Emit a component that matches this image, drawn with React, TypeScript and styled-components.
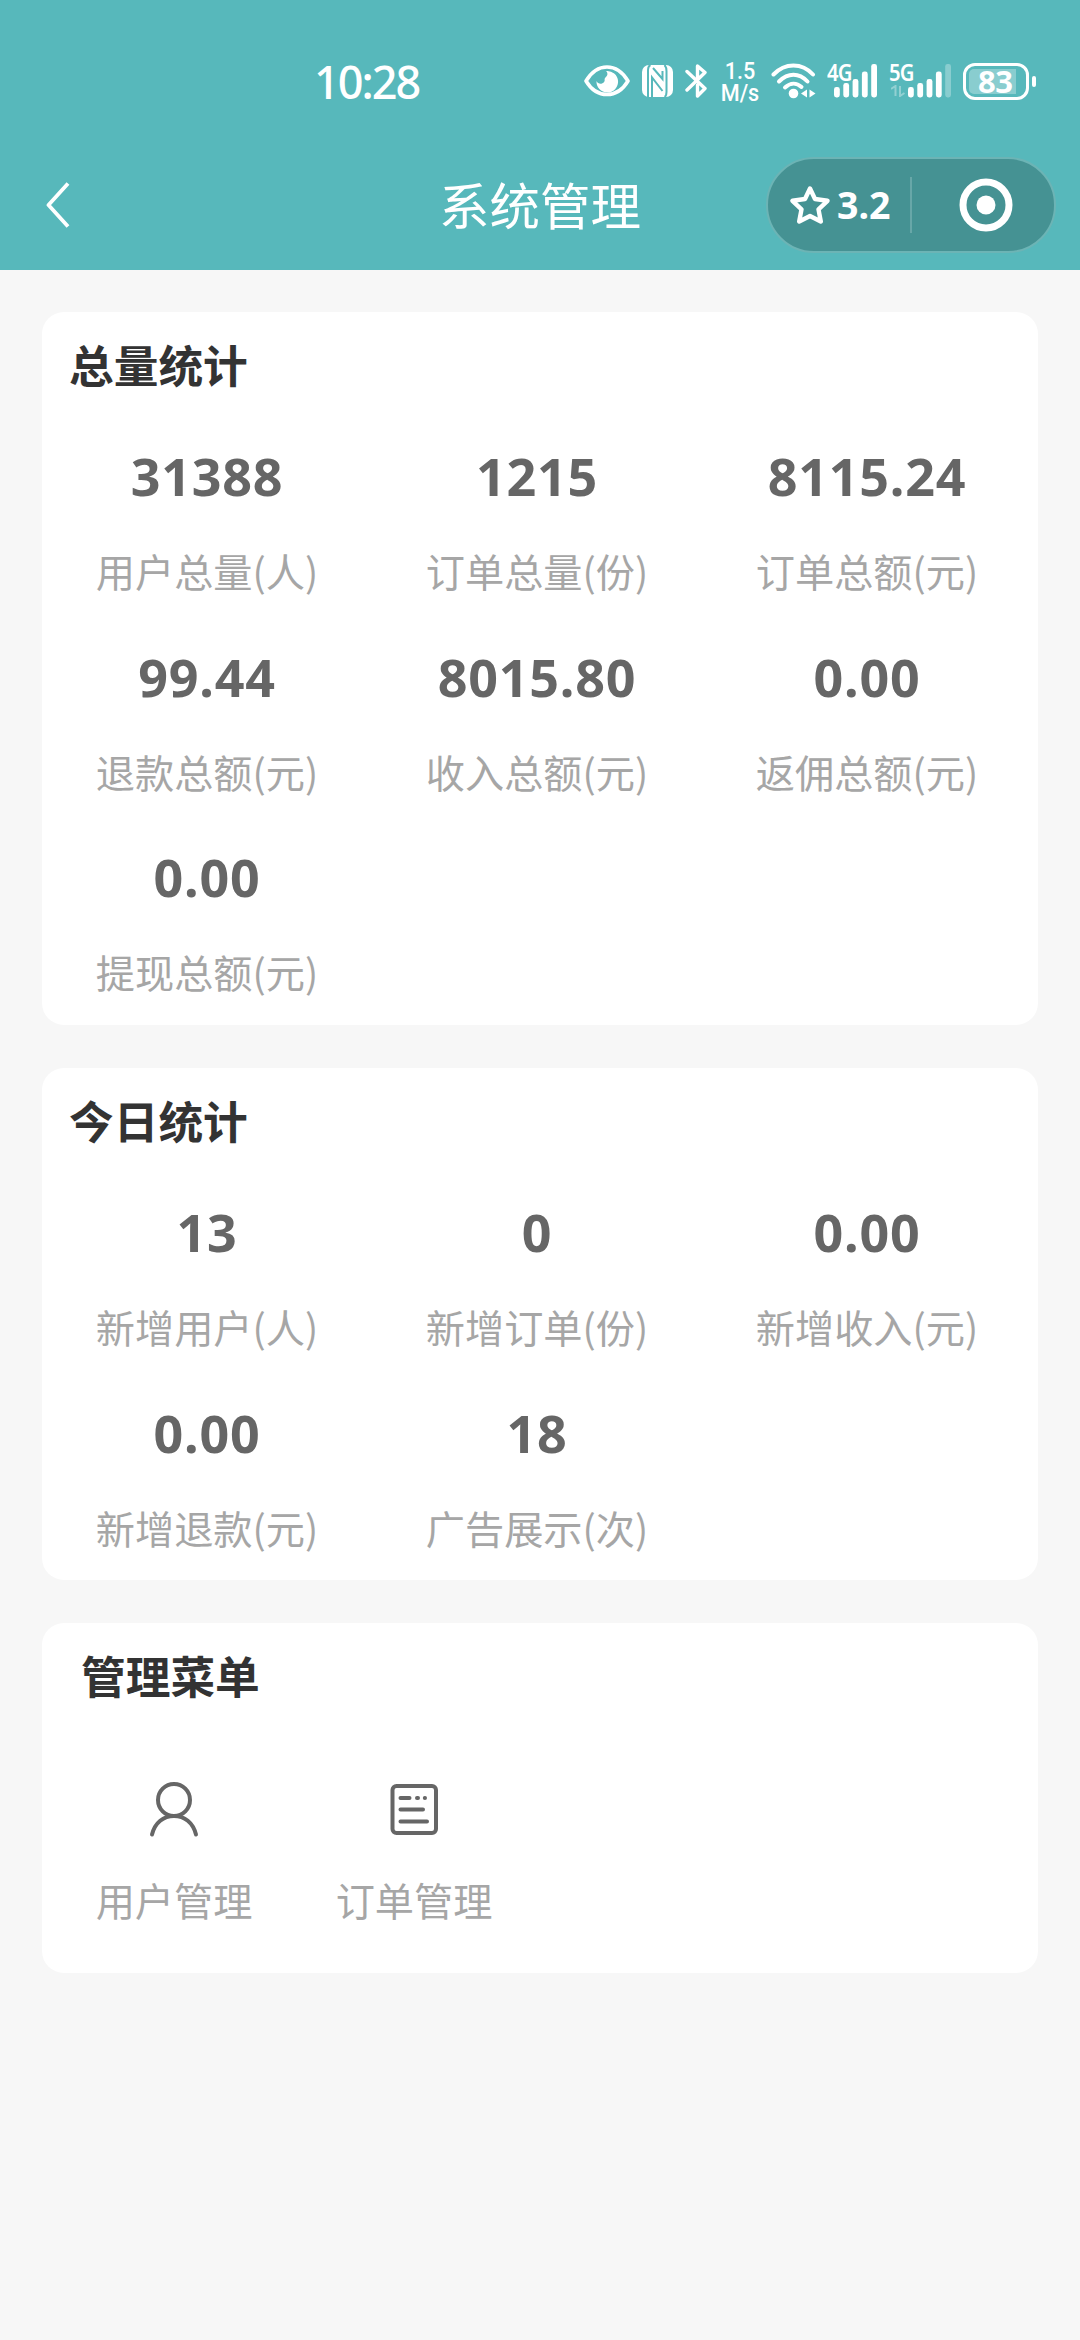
import React from "react";
import styled, { createGlobalStyle } from "styled-components";

const GlobalStyle = createGlobalStyle`
  body {
    margin: 0;
    background: #f7f7f7;
    font-family: "Noto Sans CJK SC", sans-serif;
  }
  * { box-sizing: border-box; }
  svg { display: block; flex: none; }
`;

const Screen = styled.div`
  width: 1080px;
  min-height: 2340px;
  background: #f7f7f7;
`;

const Header = styled.header`
  height: 270px;
  background: #57b8bb;
  color: #fff;
`;

const StatusBar = styled.div`
  height: 162px;
  padding: 0 44px 0 314px;
  display: flex;
  justify-content: space-between;
  align-items: center;
`;

const Clock = styled.span`
  padding-top: 1px;
  font: 500 45px/60px "Noto Sans", sans-serif;
  letter-spacing: -2px;
`;

const StatusIcons = styled.div`
  display: flex;
  align-items: center;
`;

const IconGroup = styled.div`
  display: flex;
  align-items: center;
  gap: 12px;
`;

const Speed = styled.div`
  width: 42px;
  margin: 2px 10px 0 11px;
  text-align: center;
  font: 500 23.5px/22px Roboto, sans-serif;
  transform: scaleX(0.92);
`;

const Signal = styled.div<{ $left: number; $width: number }>`
  position: relative;
  width: ${(p) => p.$width}px;
  height: 36px;
  margin-left: ${(p) => p.$left}px;
`;

const NetworkLabel = styled.span`
  position: absolute;
  left: 0;
  top: -2px;
  font: 600 23px/22px "Noto Sans", sans-serif;
  letter-spacing: -1px;
  transform: scaleX(0.88);
  transform-origin: left;
`;

const ArrowSlot = styled.div`
  position: absolute;
  left: 2px;
  bottom: 2px;
`;

const Battery = styled.div`
  margin-left: 12px;
  display: flex;
  align-items: center;
  gap: 3px;
`;

const BatteryShell = styled.div`
  width: 66px;
  height: 37px;
  padding: 3px;
  border: 3px solid #fff;
  border-radius: 12px;
`;

const BatteryLevel = styled.div`
  width: 47px;
  height: 25px;
  padding-left: 9px;
  border-radius: 5px 0 0 5px;
  background: rgba(255, 255, 255, 0.3);
  font: 700 31px/25px "Noto Sans", sans-serif;
  letter-spacing: -0.5px;
`;

const BatteryTip = styled.div`
  width: 4px;
  height: 11px;
  border-radius: 2px;
  background: #fff;
`;

const NavBar = styled.nav`
  height: 96px;
  margin-top: -5px;
  padding: 0 24px 0 46px;
  display: grid;
  grid-template-columns: 268px 1fr 290px;
  align-items: center;
`;

const NavTitle = styled.h1`
  margin: 0 0 4px;
  text-align: center;
  font-size: 50.5px;
  line-height: 72px;
  font-weight: 400;
`;

const Capsule = styled.div`
  width: 290px;
  height: 96px;
  border: 2px solid #6cb4b5;
  border-radius: 48px;
  background: #459293;
  display: flex;
  align-items: center;
`;

const Rating = styled.div`
  width: 144px;
  height: 56px;
  padding-left: 22px;
  border-right: 2px solid #68a7a8;
  display: flex;
  align-items: center;
  gap: 7px;
  font: 700 37.5px/56px "Noto Sans", sans-serif;
`;

const CloseTarget = styled.div`
  flex: 1;
  padding-left: 5px;
  display: flex;
  justify-content: center;
`;

const Content = styled.main`
  padding: 42px;
  display: flex;
  flex-direction: column;
  gap: 43px;
`;

const Card = styled.section<{ $height: number; $inset?: number }>`
  height: ${(p) => p.$height}px;
  padding: 18px ${(p) => p.$inset ?? 0}px 0;
  background: #fff;
  border-radius: 22px;
`;

const CardTitle = styled.h2`
  margin: 0;
  padding-left: 27px;
  color: #333;
  font-size: 44.7px;
  line-height: 68px;
  font-weight: 700;
`;

const StatGrid = styled.div`
  margin-top: 30px;
  display: grid;
  grid-template-columns: repeat(3, 330px);
  grid-auto-rows: 200.5px;
`;

const Stat = styled.div`
  display: flex;
  flex-direction: column;
  align-items: center;
`;

const StatValue = styled.strong`
  color: #666;
  font: 700 52px/96px "Noto Sans", sans-serif;
  letter-spacing: 0.8px;
`;

const Label = styled.span`
  color: #a6a6a6;
  font-size: 39.2px;
  line-height: 92px;
  white-space: nowrap;
`;

const MenuRow = styled.div`
  margin-top: 48px;
  display: flex;
`;

const MenuItem = styled.div`
  width: 240px;
  padding-top: 23px;
  display: flex;
  flex-direction: column;
  align-items: center;
  gap: 15px;
`;

type Item = { value: string; label: string };

const totals: Item[] = [
  { value: "31388", label: "用户总量(人)" },
  { value: "1215", label: "订单总量(份)" },
  { value: "8115.24", label: "订单总额(元)" },
  { value: "99.44", label: "退款总额(元)" },
  { value: "8015.80", label: "收入总额(元)" },
  { value: "0.00", label: "返佣总额(元)" },
  { value: "0.00", label: "提现总额(元)" },
];

const today: Item[] = [
  { value: "13", label: "新增用户(人)" },
  { value: "0", label: "新增订单(份)" },
  { value: "0.00", label: "新增收入(元)" },
  { value: "0.00", label: "新增退款(元)" },
  { value: "18", label: "广告展示(次)" },
];

const EyeIcon = () => (
  <svg width="46" height="34" viewBox="0 0 46 34" fill="none">
    <path d="M2 17C8 7 15 3 23 3s15 4 21 14c-6 10-13 13.500-21 13.500S8 27 2 17Z" stroke="#fff" strokeWidth="3.600" strokeLinejoin="round" />
    <path d="M22 7a10.800 10.800 0 1 1-9.500 10c1 2.300 3.500 3.300 5.500 2.500 2.200-.8 3-2.500 2.600-4.300-.1-1.500 2-2 2.700-4.200.4-1.600-.1-3-1.300-4Z" fill="#fff" />
  </svg>
);

const NfcIcon = () => (
  <svg width="31" height="32" viewBox="0 0 31 32" fill="none">
    <rect width="31" height="32" rx="7" fill="#fff" />
    <g stroke="#57b8bb" strokeWidth="2">
      <path d="M8.500 0Q6 1 6 5V32" />
      <path d="M22.500 0Q24.500 2 24.500 6V27Q24.500 31 22.500 32" />
      <path d="M10 32V12.500L20.500 26" />
      <path d="M11 3L20.500 14V6" />
    </g>
  </svg>
);

const BluetoothIcon = () => (
  <svg width="23" height="36" viewBox="0 0 23 36" fill="none" stroke="#fff" strokeWidth="3.400" strokeLinejoin="round" strokeLinecap="round">
    <path d="M2 8.500L20 25.500L12.500 33V22M12.500 14V3L20 9.500L2 27" />
  </svg>
);

const WifiIcon = () => (
  <svg width="45" height="36" viewBox="0 0 45 36" fill="none">
    <g stroke="#fff" strokeWidth="4" strokeLinecap="round">
      <path d="M2.500 11.500C14-.5 31-.5 42 11.500" />
      <path d="M8 18.500C17 9.500 28 9.500 36.500 18.500" />
      <path d="M14 24.500C19.500 19.500 25.500 19.500 30.500 24" />
    </g>
    <circle cx="22.500" cy="30.500" r="4.800" fill="#fff" />
    <path d="M36 26.500v8l-6-4ZM38.500 26.500v8l6-4Z" fill="#fff" />
  </svg>
);

const barTops = [24, 20, 16, 8.5, 1];

const Bars = ({ width, offset, active }: { width: number; offset: number; active: number }) => (
  <svg width={width} height="36" viewBox={`0 0 ${width} 36`}>
    {barTops.map((top, i) => (
      <rect
        key={top}
        x={offset + i * 9.3}
        y={top}
        width="5.800"
        height={34.5 - top}
        rx="2.400"
        fill="#fff"
        opacity={i < active ? 1 : 0.3}
      />
    ))}
  </svg>
);

const DataArrows = () => (
  <svg width="14" height="12" viewBox="0 0 14 12" fill="none" stroke="#fff" strokeWidth="2" opacity="0.35">
    <path d="M0 4L4.500 1v10M9 1v10l4.500-3" />
  </svg>
);

const BackIcon = () => (
  <svg width="24" height="46" viewBox="0 0 24 46" fill="none" stroke="#fff" strokeWidth="3.800" strokeLinejoin="round">
    <path d="M22 1.500L2.500 23L22 44.500" />
  </svg>
);

const StarIcon = () => (
  <svg width="40" height="40" viewBox="0 0 40 40" fill="none" stroke="#fff" strokeWidth="4.400" strokeLinejoin="round">
    <path d="M20 3.500L25 14L37.500 15.800L28.500 24.300L30.800 36.500L20 31L9.200 36.500L11.500 24.300L2.500 15.800L15 14Z" />
  </svg>
);

const TargetIcon = () => (
  <svg width="54" height="54" viewBox="0 0 54 54" fill="none">
    <circle cx="27" cy="27" r="23" stroke="#fff" strokeWidth="7" />
    <circle cx="27" cy="27" r="9.500" fill="#fff" />
  </svg>
);

const UserIcon = () => (
  <svg width="54" height="58" viewBox="0 0 54 58" fill="none" stroke="#666" strokeWidth="4" strokeLinecap="round">
    <circle cx="27" cy="20" r="16" />
    <path d="M5 54.500C8 42.500 16.500 36 27 36s19 6.500 22 18.500" />
  </svg>
);

const OrderIcon = () => (
  <svg width="54" height="58" viewBox="0 0 54 58" fill="none" stroke="#666" strokeWidth="4" strokeLinecap="round">
    <rect x="5.500" y="6" width="43.500" height="47" rx="4" />
    <path d="M13.500 18h9M30 18h1M37.800 18h.2M13.500 29.500H36M13.500 41.500H40" />
  </svg>
);

const StatCard = ({ title, items, height }: { title: string; items: Item[]; height: number }) => (
  <Card $height={height}>
    <CardTitle>{title}</CardTitle>
    <StatGrid>
      {items.map((item) => (
        <Stat key={item.label}>
          <StatValue>{item.value}</StatValue>
          <Label>{item.label}</Label>
        </Stat>
      ))}
    </StatGrid>
  </Card>
);

export default function App() {
  return (
    <Screen>
      <GlobalStyle />
      <Header>
        <StatusBar>
          <Clock>10:28</Clock>
          <StatusIcons>
            <IconGroup>
              <EyeIcon />
              <NfcIcon />
              <BluetoothIcon />
            </IconGroup>
            <Speed>
              1.5
              <br />
              M/s
            </Speed>
            <WifiIcon />
            <Signal $left={11} $width={53}>
              <NetworkLabel>4G</NetworkLabel>
              <Bars width={53} offset={7} active={5} />
            </Signal>
            <Signal $left={9} $width={62}>
              <NetworkLabel>5G</NetworkLabel>
              <ArrowSlot>
                <DataArrows />
              </ArrowSlot>
              <Bars width={62} offset={19} active={4} />
            </Signal>
            <Battery>
              <BatteryShell>
                <BatteryLevel>83</BatteryLevel>
              </BatteryShell>
              <BatteryTip />
            </Battery>
          </StatusIcons>
        </StatusBar>
        <NavBar>
          <BackIcon />
          <NavTitle>系统管理</NavTitle>
          <Capsule>
            <Rating>
              <StarIcon />
              3.2
            </Rating>
            <CloseTarget>
              <TargetIcon />
            </CloseTarget>
          </Capsule>
        </NavBar>
      </Header>
      <Content>
        <StatCard title="总量统计" items={totals} height={713} />
        <StatCard title="今日统计" items={today} height={512} />
        <Card $height={350} $inset={12}>
          <CardTitle>管理菜单</CardTitle>
          <MenuRow>
            <MenuItem>
              <UserIcon />
              <Label>用户管理</Label>
            </MenuItem>
            <MenuItem>
              <OrderIcon />
              <Label>订单管理</Label>
            </MenuItem>
          </MenuRow>
        </Card>
      </Content>
    </Screen>
  );
}
